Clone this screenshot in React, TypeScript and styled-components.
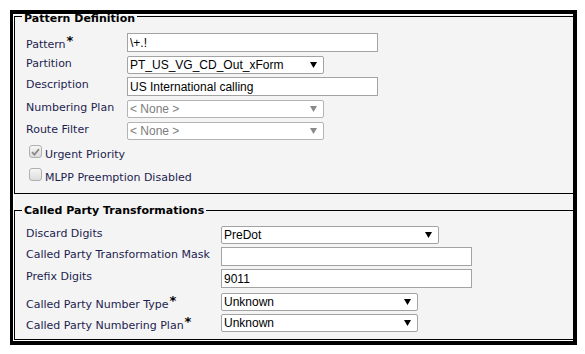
import React from "react";
import styled, { createGlobalStyle } from "styled-components";

const GlobalStyle = createGlobalStyle`
  html, body { margin: 0; padding: 0; background: #fff; }
  body { width: 585px; height: 354px; overflow: hidden; }
`;

const Frame = styled.div`
  box-sizing: border-box;
  margin: 10px 0 0 10px;
  width: 567px;
  height: 335px;
  border: 4px solid #000;
  border-left-width: 3px;
  background: #fff;
  padding: 1px 0 1px 1px;
`;

const Inner = styled.div`
  height: 100%;
  background: #f4f4f4;
  display: flex;
  flex-direction: column;
`;

const Fieldset = styled.fieldset<{ $mt: number; $pt: number; $pb: number }>`
  margin: ${(p) => p.$mt}px 0 0 0;
  padding: 0 0 ${(p) => p.$pb}px 7px;
  border: 1px solid #000;
  border-right: none;
  min-width: 0;
  & > div:first-of-type {
    padding-top: ${(p) => p.$pt}px;
  }
`;

const Legend = styled.legend<{ $top?: number }>`
  padding: ${(p) => p.$top ?? 0}px 2px 0 2px;
  margin: 0;
  font: bold 11px/13px "DejaVu Sans", Verdana, sans-serif;
  color: #000;
`;

const Grid = styled.div<{ $col: number }>`
  display: grid;
  grid-template-columns: ${(p) => p.$col}px 1fr;
  padding-left: 4px;
`;

const Row = styled.div<{ $h: number }>`
  display: contents;
  & > * {
    height: ${(p) => p.$h}px;
  }
`;

const Label = styled.div`
  box-sizing: border-box;
  padding-top: 1px;
  font: 11px/13px "DejaVu Sans", Verdana, sans-serif;
  color: #1d1d4f;
  white-space: nowrap;
`;

const Req = styled.span`
  color: #000;
  font: bold 13px/13px "DejaVu Sans", Verdana, sans-serif;
  vertical-align: 3px;
  margin-left: 1px;
`;

const Cell = styled.div`
  display: flex;
  align-items: flex-start;
`;

const TextBox = styled.input<{ $w: number }>`
  box-sizing: border-box;
  width: ${(p) => p.$w}px;
  height: 19px;
  margin: 0;
  border: 1px solid #a3a3a3;
  border-radius: 0;
  padding: 0 2px;
  background: #fff;
  font: 12px "Liberation Sans", Arial, sans-serif;
  color: #000;
  outline: none;
`;

const SelectBox = styled.div<{ $w: number; $disabled?: boolean }>`
  box-sizing: border-box;
  width: ${(p) => p.$w}px;
  height: 18px;
  border: 1px solid ${(p) => (p.$disabled ? "#b4b4b4" : "#a3a3a3")};
  border-radius: 2px;
  background: #fff;
  display: flex;
  align-items: center;
  justify-content: space-between;
  padding: 0 6px 0 2px;
  font: 12px "Liberation Sans", Arial, sans-serif;
  color: ${(p) => (p.$disabled ? "#7d7d7d" : "#000")};
  white-space: nowrap;
`;

const Arrow = ({ color }: { color: string }) => (
  <svg width="7" height="6" viewBox="0 0 7 6">
    <polygon points="0,0 7,0 3.5,6" fill={color} />
  </svg>
);

const CheckList = styled.div`
  display: flex;
  flex-direction: column;
  padding-left: 4px;
`;

const CheckRow = styled.div`
  display: flex;
  align-items: flex-start;
  height: 23px;
`;

const Box = styled.span`
  box-sizing: border-box;
  width: 13px;
  height: 13px;
  margin: 1px 3px 0 3px;
  border: 1px solid #b0b0b0;
  border-radius: 3px;
  background: linear-gradient(#f6f6f6, #dcdcdc);
  display: flex;
  align-items: center;
  justify-content: center;
`;

const CheckText = styled.span`
  padding-top: 4px;
  font: 11px/13px "DejaVu Sans", Verdana, sans-serif;
  color: #1d1d4f;
`;

type Field =
  | { label: string; req?: boolean; h: number; kind: "text"; w: number; value: string }
  | { label: string; req?: boolean; h: number; kind: "select"; w: number; value: string; disabled?: boolean };

const patternFields: Field[] = [
  { label: "Pattern", req: true, h: 23, kind: "text", w: 251, value: "\\+.!" },
  { label: "Partition", h: 21, kind: "select", w: 197, value: "PT_US_VG_CD_Out_xForm" },
  { label: "Description", h: 23, kind: "text", w: 251, value: "US International calling" },
  { label: "Numbering Plan", h: 22, kind: "select", w: 197, value: "< None >", disabled: true },
  { label: "Route Filter", h: 22, kind: "select", w: 197, value: "< None >", disabled: true },
];

const calledFields: Field[] = [
  { label: "Discard Digits", h: 21, kind: "select", w: 218, value: "PreDot" },
  { label: "Called Party Transformation Mask", h: 22, kind: "text", w: 251, value: "" },
  { label: "Prefix Digits", h: 24, kind: "text", w: 251, value: "9011" },
  { label: "Called Party Number Type", req: true, h: 21, kind: "select", w: 197, value: "Unknown" },
  { label: "Called Party Numbering Plan", req: true, h: 21, kind: "select", w: 197, value: "Unknown" },
];

const FieldRows = ({ fields }: { fields: Field[] }) => (
  <>
    {fields.map((f) => (
      <Row key={f.label} $h={f.h}>
        <Label>
          {f.label}
          {f.req && <Req>*</Req>}
        </Label>
        <Cell>
          {f.kind === "text" ? (
            <TextBox $w={f.w} defaultValue={f.value} readOnly />
          ) : (
            <SelectBox $w={f.w} $disabled={f.disabled}>
              <span>{f.value}</span>
              <Arrow color={f.disabled ? "#8a8a8a" : "#000"} />
            </SelectBox>
          )}
        </Cell>
      </Row>
    ))}
  </>
);

const Check = () => (
  <svg width="9" height="8" viewBox="0 0 9 8">
    <path d="M1 4.2 L3.4 6.6 L8 1.2" stroke="#8c8c8c" strokeWidth="1.8" fill="none" />
  </svg>
);

export default function App() {
  return (
    <>
      <GlobalStyle />
      <Frame>
        <Inner>
          <Fieldset $mt={-7} $pt={8} $pb={3}>
            <Legend $top={4}>Pattern Definition</Legend>
            <Grid $col={101}>
              <FieldRows fields={patternFields} />
            </Grid>
            <CheckList>
              <CheckRow>
                <Box>
                  <Check />
                </Box>
                <CheckText>Urgent Priority</CheckText>
              </CheckRow>
              <CheckRow>
                <Box />
                <CheckText>MLPP Preemption Disabled</CheckText>
              </CheckRow>
            </CheckList>
          </Fieldset>
          <Fieldset $mt={10} $pt={9} $pb={4}>
            <Legend>Called Party Transformations</Legend>
            <Grid $col={195}>
              <FieldRows fields={calledFields} />
            </Grid>
          </Fieldset>
        </Inner>
      </Frame>
    </>
  );
}
